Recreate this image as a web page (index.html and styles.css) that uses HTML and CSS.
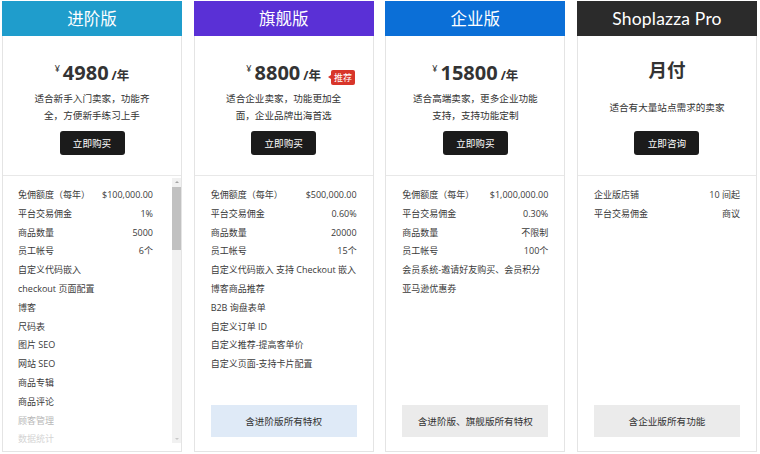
FILE: index.html
```html
<!DOCTYPE html>
<html lang="zh-CN">
<head>
<meta charset="utf-8">
<title>Plans</title>
<link rel="stylesheet" href="styles.css">
</head>
<body>
<div class="plans">
  <div class="card">
    <div class="head head-teal">进阶版</div>
    <div class="top">
      <div class="price"><span class="yen">¥</span><span class="num">4980</span><span class="unit">/年</span></div>
      <div class="desc">适合新手入门卖家，功能齐<br>全，方便新手练习上手</div>
      <div class="btn">立即购买</div>
    </div>
    <div class="scroll-area">
      <ul class="feats">
        <li><span>免佣额度（每年）</span><span>$100,000.00</span></li>
        <li><span>平台交易佣金</span><span>1%</span></li>
        <li><span>商品数量</span><span>5000</span></li>
        <li><span>员工帐号</span><span>6个</span></li>
        <li><span>自定义代码嵌入</span></li>
        <li><span>checkout 页面配置</span></li>
        <li><span>博客</span></li>
        <li><span>尺码表</span></li>
        <li><span>图片 SEO</span></li>
        <li><span>网站 SEO</span></li>
        <li><span>商品专辑</span></li>
        <li><span>商品评论</span></li>
        <li class="fade1"><span>顾客管理</span></li>
        <li class="fade2"><span>数据统计</span></li>
      </ul>
      <div class="scrollbar">
        <div class="arrow arrow-up"></div>
        <div class="track"><div class="thumb"></div></div>
        <div class="arrow arrow-down"></div>
      </div>
    </div>
  </div>

  <div class="card">
    <div class="head head-purple">旗舰版</div>
    <div class="top">
      <div class="price"><span class="price-inner"><span class="yen">¥</span><span class="num">8800</span><span class="unit">/年</span><span class="badge">推荐</span></span></div>
      <div class="desc">适合企业卖家，功能更加全<br>面，企业品牌出海首选</div>
      <div class="btn">立即购买</div>
    </div>
    <div class="body">
      <ul class="feats">
        <li><span>免佣额度（每年）</span><span>$500,000.00</span></li>
        <li><span>平台交易佣金</span><span>0.60%</span></li>
        <li><span>商品数量</span><span>20000</span></li>
        <li><span>员工帐号</span><span>15个</span></li>
        <li><span>自定义代码嵌入 支持 Checkout 嵌入</span></li>
        <li><span>博客商品推荐</span></li>
        <li><span>B2B 询盘表单</span></li>
        <li><span>自定义订单 ID</span></li>
        <li><span>自定义推荐-提高客单价</span></li>
        <li><span>自定义页面-支持卡片配置</span></li>
      </ul>
      <div class="note note-blue">含进阶版所有特权</div>
    </div>
  </div>

  <div class="card">
    <div class="head head-blue">企业版</div>
    <div class="top">
      <div class="price"><span class="yen">¥</span><span class="num">15800</span><span class="unit">/年</span></div>
      <div class="desc">适合高端卖家，更多企业功能<br>支持，支持功能定制</div>
      <div class="btn">立即购买</div>
    </div>
    <div class="body">
      <ul class="feats">
        <li><span>免佣额度（每年）</span><span>$1,000,000.00</span></li>
        <li><span>平台交易佣金</span><span>0.30%</span></li>
        <li><span>商品数量</span><span>不限制</span></li>
        <li><span>员工帐号</span><span>100个</span></li>
        <li><span>会员系统-邀请好友购买、会员积分</span></li>
        <li><span>亚马逊优惠券</span></li>
      </ul>
      <div class="note note-gray">含进阶版、旗舰版所有特权</div>
    </div>
  </div>

  <div class="card">
    <div class="head head-dark head-latin">Shoplazza Pro</div>
    <div class="top">
      <div class="price"><span class="monthly">月付</span></div>
      <div class="desc">适合有大量站点需求的卖家</div>
      <div class="btn">立即咨询</div>
    </div>
    <div class="body">
      <ul class="feats">
        <li><span>企业版店铺</span><span>10 间起</span></li>
        <li><span>平台交易佣金</span><span>商议</span></li>
      </ul>
      <div class="note note-gray">含企业版所有功能</div>
    </div>
  </div>
</div>
</body>
</html>
```

FILE: styles.css
```css
* { box-sizing: border-box; }

html, body {
  margin: 0;
  padding: 0;
  background: #ffffff;
}

body {
  font-family: "Open Sans", "Noto Sans CJK SC", sans-serif;
  color: #333333;
}

.plans {
  display: flex;
  gap: 11.67px;
  padding: 1px 0 0 2px;
  width: 759px;
}

.card {
  width: 180px;
  height: 451px;
  border: 1px solid #e4e4e4;
  border-top: none;
  display: flex;
  flex-direction: column;
  background: #fff;
}

.head {
  height: 35px;
  margin: 0 -1px;
  color: #ffffff;
  font-family: "Noto Sans CJK SC", sans-serif;
  font-size: 16.5px;
  line-height: 35px;
  text-align: center;
}

.head-latin {
  font-family: "Lato", "Open Sans", sans-serif;
  font-size: 17.5px;
  letter-spacing: 0.2px;
}

.head-teal { background: #1f9dcc; }
.head-purple { background: #5a30d6; }
.head-blue { background: #0b6fd7; }
.head-dark { background: #2b2b2b; }

.top {
  height: 140px;
  border-bottom: 1px solid #e8e8e8;
  padding-top: 17px;
  display: flex;
  flex-direction: column;
  align-items: center;
}

.price {
  height: 32px;
  line-height: 32px;
  text-align: center;
  white-space: nowrap;
}

.price-inner {
  position: relative;
}

.yen {
  font-size: 9px;
  vertical-align: 8px;
  margin-right: 3px;
  color: #333;
}

.num {
  font-size: 20px;
  font-weight: 700;
  color: #333;
}

.unit {
  font-size: 12.5px;
  font-weight: 700;
  margin-left: 3px;
  color: #333;
}

.monthly {
  font-family: "Noto Sans CJK SC", sans-serif;
  font-size: 18.5px;
  font-weight: 700;
  color: #333;
}

.badge {
  position: absolute;
  left: calc(100% + 10px);
  top: 7px;
  width: 24px;
  height: 15px;
  line-height: 15px;
  background: #d8352a;
  color: #fff;
  font-family: "Noto Sans CJK SC", sans-serif;
  font-size: 9px;
  text-align: center;
  border-radius: 2px;
}

.badge::before {
  content: "";
  position: absolute;
  left: -3px;
  top: 5px;
  border-style: solid;
  border-width: 2.5px 3px 2.5px 0;
  border-color: transparent #d8352a transparent transparent;
}

.desc {
  margin-top: 5px;
  height: 34px;
  display: flex;
  align-items: center;
  justify-content: center;
  text-align: center;
  font-family: "Noto Sans CJK SC", sans-serif;
  font-size: 9.6px;
  line-height: 17px;
  color: #333;
}

.btn {
  margin-top: 7px;
  width: 65px;
  height: 24px;
  line-height: 24px;
  background: #1b1b1b;
  color: #fff;
  border-radius: 3px;
  text-align: center;
  font-family: "Noto Sans CJK SC", sans-serif;
  font-size: 9.6px;
}

.body {
  flex: 1;
  display: flex;
  flex-direction: column;
  padding: 10px 16px 14px 16px;
}

.feats {
  list-style: none;
  margin: 0;
  padding: 0;
}

.feats li {
  display: flex;
  justify-content: space-between;
  height: 18.8px;
  line-height: 18.8px;
  font-size: 9px;
  color: #3a3a3a;
  white-space: nowrap;
}

.note {
  margin-top: auto;
  height: 32px;
  line-height: 32px;
  text-align: center;
  font-family: "Noto Sans CJK SC", sans-serif;
  font-size: 9.6px;
  color: #333;
}

.note-blue { background: #dfeaf7; }
.note-gray { background: #ebebeb; }

.scroll-area {
  flex: 1;
  display: flex;
  min-height: 0;
  padding-bottom: 2px;
}

.scroll-area .feats {
  flex: 1;
  overflow: hidden;
  padding: 10px 19px 0 15px;
}

.feats li.fade1 { color: #b8b8b8; }
.feats li.fade2 { color: #d4d4d4; }

.scrollbar {
  width: 9px;
  margin-top: 2px;
  margin-bottom: 6px;
  display: flex;
  flex-direction: column;
  background: #f1f1f1;
}

.arrow {
  height: 9px;
  position: relative;
}

.arrow::after {
  content: "";
  position: absolute;
  left: 2.5px;
  border-style: solid;
  border-color: transparent;
}

.arrow-up::after {
  top: 3px;
  border-width: 0 2px 2px 2px;
  border-bottom-color: #a3a3a3;
}

.arrow-down::after {
  top: 4px;
  border-width: 2px 2px 0 2px;
  border-top-color: #c8c8c8;
}

.track {
  flex: 1;
}

.thumb {
  height: 63px;
  background: #c1c1c1;
}
```
